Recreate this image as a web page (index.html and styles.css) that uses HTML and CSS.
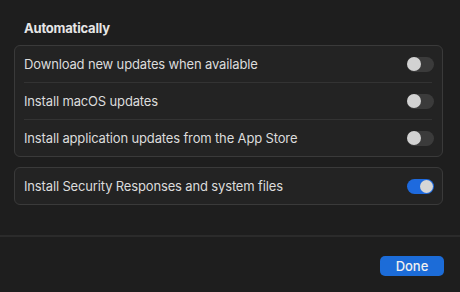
FILE: index.html
```html
<!DOCTYPE html>
<html>
<head>
<meta charset="utf-8">
<link rel="stylesheet" href="styles.css">
</head>
<body>
<div class="sheet">
  <div class="content">
    <h2 class="heading">Automatically</h2>
    <div class="group">
      <div class="row">
        <span class="label">Download new updates when available</span>
        <span class="toggle"><span class="knob"></span></span>
      </div>
      <div class="divider"></div>
      <div class="row">
        <span class="label">Install macOS updates</span>
        <span class="toggle"><span class="knob"></span></span>
      </div>
      <div class="divider"></div>
      <div class="row">
        <span class="label">Install application updates from the App Store</span>
        <span class="toggle"><span class="knob"></span></span>
      </div>
    </div>
    <div class="group">
      <div class="row">
        <span class="label">Install Security Responses and system files</span>
        <span class="toggle on"><span class="knob"></span></span>
      </div>
    </div>
  </div>
  <div class="footer">
    <button class="done">Done</button>
  </div>
</div>
</body>
</html>
```
FILE: styles.css
```css
html, body {
  margin: 0;
  padding: 0;
  background: #1e1e1e;
}
body {
  width: 460px;
  height: 292px;
  overflow: hidden;
  font-family: Inter, "Liberation Sans", sans-serif;
  color: #dedede;
  -webkit-font-smoothing: antialiased;
}
.sheet {
  display: flex;
  flex-direction: column;
  height: 292px;
}
.content {
  padding: 20px 17px 0 14px;
  display: flex;
  flex-direction: column;
  gap: 10px;
  height: 216px;
  box-sizing: border-box;
}
.heading {
  margin: 0 0 -1px 10px;
  font-size: 13px;
  font-weight: 700;
  line-height: 16px;
  letter-spacing: -0.2px;
  color: #e6e6e6;
}
.group {
  background: #232323;
  border: 1px solid #3a3a3a;
  border-radius: 6px;
  display: flex;
  flex-direction: column;
}
.row {
  height: 36px;
  display: flex;
  align-items: center;
  justify-content: space-between;
  padding: 0 8px 0 9px;
}
.label {
  font-size: 13px;
  letter-spacing: -0.15px;
  color: #dcdcdc;
}
.divider {
  height: 1px;
  background: #333333;
  margin: 0 10px 0 9px;
}
.toggle {
  width: 27px;
  height: 15px;
  border-radius: 8px;
  background: #3b3b3b;
  display: flex;
  align-items: center;
  padding: 0;
  box-sizing: border-box;
}
.knob {
  width: 14px;
  height: 14px;
  border-radius: 50%;
  background: #d2d2d2;
  margin-left: 0;
}
.toggle.on {
  background: #1e6ade;
  justify-content: flex-end;
}
.toggle.on .knob {
  width: 13px;
  height: 13px;
  margin-right: 1px;
  background: #d6d6d6;
}
.footer {
  border-top: 2px solid #2b2b2b;
  margin-top: 19px;
  flex: 1;
  display: flex;
  justify-content: flex-end;
  align-items: flex-start;
  padding: 19px 16px 0 0;
}
.done {
  width: 64px;
  height: 20px;
  border: none;
  border-radius: 5px;
  background: #1c6cd8;
  color: #f0f0f0;
  font-family: Inter, "Liberation Sans", sans-serif;
  font-size: 13px;
  font-weight: 500;
  padding: 0;
}
```
